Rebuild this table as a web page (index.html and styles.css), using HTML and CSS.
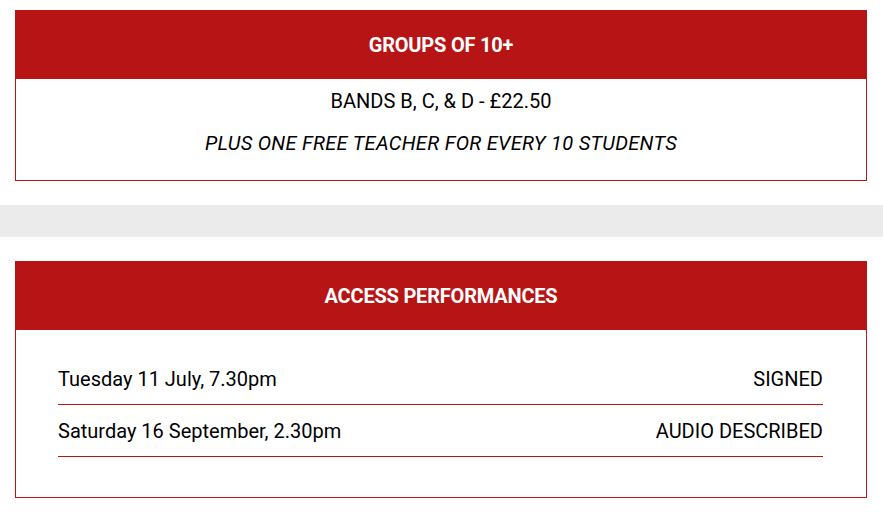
FILE: index.html
```html
<!DOCTYPE html>
<html lang="en">
<head>
<meta charset="utf-8">
<link rel="stylesheet" href="styles.css">
</head>
<body>
<section class="card">
  <h2 class="card-head">GROUPS OF 10+</h2>
  <div class="card-body groups">
    <p class="line">BANDS B, C, &amp; D - £22.50</p>
    <p class="line italic">PLUS ONE FREE TEACHER FOR EVERY 10 STUDENTS</p>
  </div>
</section>
<div class="band"></div>
<section class="card">
  <h2 class="card-head">ACCESS PERFORMANCES</h2>
  <div class="card-body access">
    <div class="row"><span>Tuesday 11 July, 7.30pm</span><span>SIGNED</span></div>
    <div class="row"><span>Saturday 16 September, 2.30pm</span><span>AUDIO DESCRIBED</span></div>
  </div>
</section>
</body>
</html>
```
FILE: styles.css
```css
* { box-sizing: border-box; }
body {
  margin: 0;
  padding-top: 10px;
  font-family: Roboto, "Liberation Sans", sans-serif;
  color: #000;
  background: #fff;
}
.card {
  margin: 0 16px 0 15px;
  border: 1px solid #b71515;
}
.card-head {
  margin: -1px -1px 0 -1px;
  height: 69px;
  background: #b71515;
  color: #fff;
  font-size: 20px;
  font-weight: 700;
  letter-spacing: -0.2px;
  display: flex;
  align-items: center;
  justify-content: center;
}
.groups {
  padding: 10px 0 25px;
  display: flex;
  flex-direction: column;
  gap: 18px;
  text-align: center;
}
.line {
  margin: 0;
  font-size: 20px;
  line-height: 24px;
}
.italic {
  font-style: italic;
  letter-spacing: 0.3px;
}
.band {
  height: 32px;
  margin: 24px 0;
  background: #ebebeb;
}
.access {
  padding: 23px 43px 40px 42px;
}
.row {
  display: flex;
  justify-content: space-between;
  padding: 14px 0 13px;
  font-size: 20px;
  line-height: 24px;
  border-bottom: 1px solid #b71515;
}
```
